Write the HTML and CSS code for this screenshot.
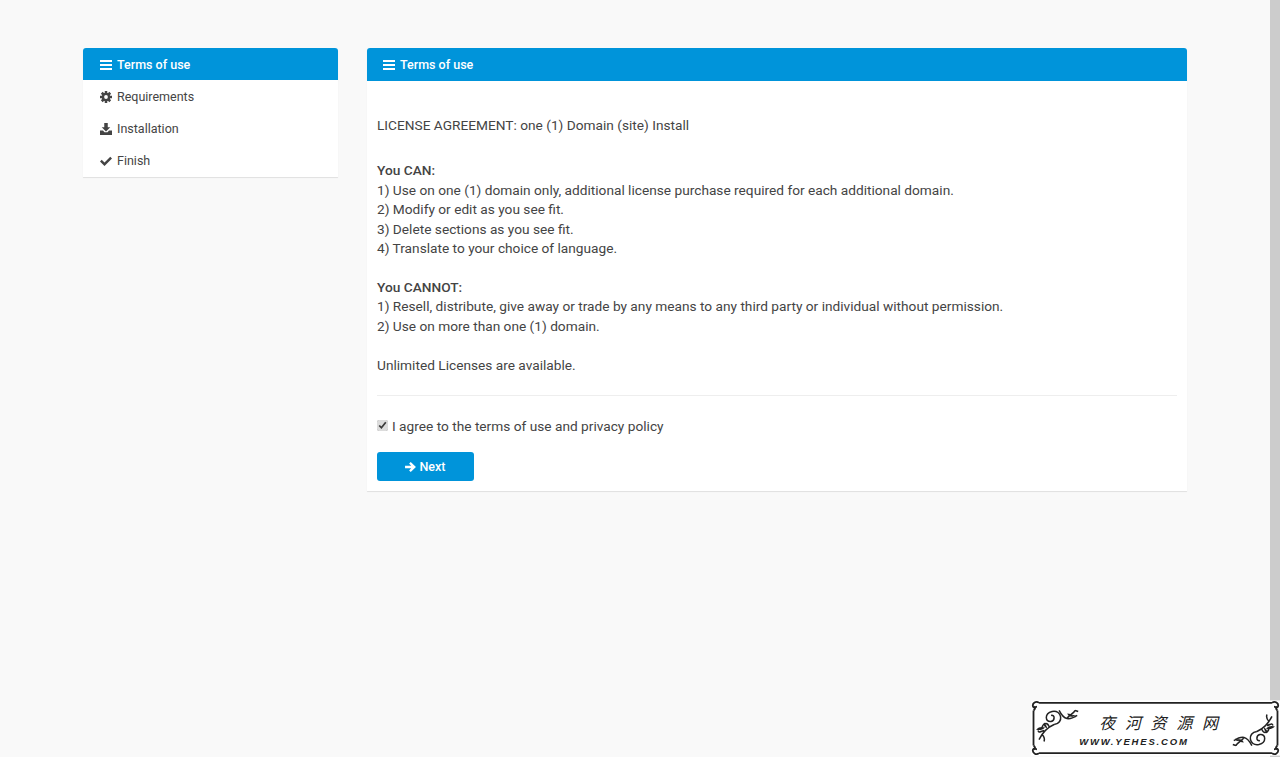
FILE: index.html
```html
<!DOCTYPE html>
<html lang="en">
<head>
<meta charset="utf-8">
<title>Terms of use</title>
<link rel="stylesheet" href="styles.css">
</head>
<body>
<div class="page">
  <div class="wrap">
    <aside class="side">
      <div class="side-item active">
        <svg class="ico" viewBox="0 0 12 10"><path d="M0 0h12v2H0zM0 4h12v2H0zM0 8h12v2H0z"/></svg>
        <span>Terms of use</span>
      </div>
      <div class="side-item">
        <svg class="ico ico-sq" viewBox="0 0 24 24">
          <circle cx="12" cy="12" r="8.500"/>
          <path d="M9.500 0h5v24h-5zM0 9.500h24v5H0z"/>
          <path d="M9.500 0h5v24h-5zM0 9.500h24v5H0z" transform="rotate(45 12 12)"/>
          <circle class="gear-hole" cx="12" cy="12" r="3.800"/>
        </svg>
        <span>Requirements</span>
      </div>
      <div class="side-item">
        <svg class="ico ico-sq" viewBox="0 0 24 24"><path d="M8.500 0h7v8.500h5L12 17 3.500 8.500h5zM0 15h6l3 3.500h6l3-3.500h6v9H0z"/></svg>
        <span>Installation</span>
      </div>
      <div class="side-item">
        <svg class="ico" viewBox="0 0 24 20"><path d="M0 11l3.500-3.500L9 13 20.500 1.500 24 5 9 20z"/></svg>
        <span>Finish</span>
      </div>
    </aside>
    <main class="panel">
      <div class="panel-head">
        <svg class="ico" viewBox="0 0 12 10"><path d="M0 0h12v2H0zM0 4h12v2H0zM0 8h12v2H0z"/></svg>
        <span>Terms of use</span>
      </div>
      <div class="panel-body">
        <p class="lead">LICENSE AGREEMENT: one (1) Domain (site) Install</p>
        <p class="block"><b class="strong">You CAN:</b><br>
        1) Use on one (1) domain only, additional license purchase required for each additional domain.<br>
        2) Modify or edit as you see fit.<br>
        3) Delete sections as you see fit.<br>
        4) Translate to your choice of language.</p>
        <p class="block"><b class="strong">You CANNOT:</b><br>
        1) Resell, distribute, give away or trade by any means to any third party or individual without permission.<br>
        2) Use on more than one (1) domain.</p>
        <p class="block">Unlimited Licenses are available.</p>
        <hr class="rule">
        <label class="agree"><input type="checkbox" class="check" checked> <span>I agree to the terms of use and privacy policy</span></label>
        <button class="next" type="button">
          <svg class="ico-next" viewBox="0 0 24 22"><path d="M12.500 0L24 11 12.500 22l-3.500-3.500 4.500-4.500H0V8h13.500L9 3.500z"/></svg>
          <span>Next</span>
        </button>
      </div>
    </main>
  </div>
  <div class="scrollbar"></div>
</div>
<div class="mark">
  <svg class="mark-art" viewBox="0 0 248 55">
    <rect x="0" y="0" width="248" height="55" fill="#fff"/>
    <path class="frame" d="M8 2.500H240M8 52.500H240M2.500 10V45M245.500 10V45"/>
    <path class="frame" d="M8 2.500c-3-2.500-7 .5-6 3.500.7 2 3.500 1.500 3-.5M2.500 10c2-1.500 2-3 .5-4M240 2.500c3-2.500 7 .5 6 3.500-.7 2-3.500 1.500-3-.5M245.500 10c-2-1.500-2-3-.5-4M8 52.500c-3 2.500-7-.5-6-3.500.7-2 3.500-1.500 3 .5M2.500 45c2 1.500 2 3 .5 4M240 52.500c3 2.500 7-.5 6-3.500-.7-2-3.500-1.500-3 .5M245.500 45c-2 1.500-2 3-.5 4"/>
    <g class="orn">
      <path d="M8 39C12 31 16 27 23 24M13 30C9 31 8 33 7 30M18 26C16 21 12 23 11 27M11 34C13 36 14 38 13 41"/>
      <path d="M23 24C33 23 31 9 21 11C13 13 14 22 20 21C24 20 24 14 20 15"/>
      <path d="M28 10C33 20 38 20 46 15M36 18C38 14 42 14 44 10M44 10l3 1M41 15l4 1"/>
    </g>
    <g class="leaf">
      <path d="M5 29c3-3 6-3 9-2-3 3-6 3-9 2zM13 22c2 2 3 4 3 6-2-1-4-3-3-6zM36 13c3 0 5 1 6 3-3 1-5-1-6-3z"/>
      <path d="M243 26c-3 3-6 3-9 2 3-3 6-3 9-2zM235 33c-2-2-3-4-3-6 2 1 4 3 3 6zM212 42c-3 0-5-1-6-3 3-1 5 1 6 3z"/>
    </g>
    <g class="orn">
      <path d="M240 16C236 24 232 28 225 31M235 25C239 24 240 22 241 25M230 29C232 34 236 32 237 28M237 21C235 19 234 17 235 14"/>
      <path d="M225 31C215 32 217 46 227 44C235 42 234 33 228 34C224 35 224 41 228 40"/>
      <path d="M220 45C215 35 210 35 202 40M212 37C210 41 206 41 204 45M204 45l-3-1M207 40l-4-1"/>
    </g>
    <text class="mark-cn" x="68" y="29">夜 河 资 源 网</text>
    <text class="mark-en" x="48" y="44">WWW.YEHES.COM</text>
  </svg>
</div>
</body>
</html>
```

FILE: styles.css
```css
* { box-sizing: border-box; }
html, body { margin: 0; height: 100%; overflow: hidden; }
body {
  background: #f9f9f9;
  color: #444;
  font-family: Roboto, "Noto Sans", sans-serif;
  font-size: 13.700px;
  line-height: 19.400px;
}
.page { display: flex; height: 757px; position: relative; }
.wrap {
  flex: 1;
  display: flex;
  align-items: flex-start;
  gap: 29px;
  padding: 48px 83px 0 83px;
}
.side {
  width: 255px;
  flex: none;
  padding-bottom: 1px;
  background: #fff;
  border-radius: 3px 3px 0 0;
  box-shadow: 0 1px 1px rgba(0, 0, 0, 0.1);
  font-size: 12.500px;
}
.side-item {
  height: 32px;
  display: flex;
  align-items: center;
  gap: 5px;
  padding-left: 17px;
  padding-top: 1px;
  color: #444;
}
.side-item.active {
  background: #0094da;
  color: #fff;
  border-radius: 3px 3px 0 0;
  font-weight: 500;
}
.ico { width: 12px; height: 10px; fill: currentColor; flex: none; }
.ico-sq { height: 12px; }
.gear-hole { fill: #fff; }
.panel {
  width: 820px;
  flex: none;
  background: #fff;
  border-radius: 3px 3px 0 0;
  box-shadow: 0 1px 1px rgba(0, 0, 0, 0.1);
}
.panel-head {
  height: 33px;
  display: flex;
  align-items: center;
  gap: 5px;
  padding-left: 16px;
  background: #0094da;
  color: #fff;
  font-size: 12.500px;
  font-weight: 500;
  border-radius: 3px 3px 0 0;
}
.panel-body { padding: 35px 10px 10px; }
.lead { margin: 0 0 26px; }
.block { margin: 0 0 19.500px; }
.strong { font-weight: 500; }
.rule { border: 0; border-top: 1px solid #eee; margin: 20px 0 21px; }
.agree { display: flex; align-items: center; gap: 4px; }
.check { width: 11px; height: 11px; margin: 0 0 2px; accent-color: #dcdcdc; }
.next {
  display: flex;
  align-items: center;
  justify-content: center;
  gap: 3px;
  width: 97px;
  height: 29px;
  margin-top: 16px;
  border: 0;
  border-radius: 3px;
  background: #0094da;
  color: #fff;
  font-family: inherit;
  font-size: 12.500px;
  font-weight: 500;
}
.ico-next { width: 11px; height: 10px; fill: currentColor; }
.scrollbar { width: 10px; flex: none; background: #ccc; }
.mark { position: absolute; right: 0; bottom: 1px; width: 249px; height: 56px; }
.mark-art { display: block; width: 249px; height: 56px; }
.frame { fill: none; stroke: #222; stroke-width: 1.800; }
.orn { fill: none; stroke: #222; stroke-width: 1.500; }
.leaf { fill: #222; }
.mark-cn { font-family: "Noto Sans CJK SC", sans-serif; font-size: 16px; font-style: italic; letter-spacing: 3px; fill: #222; }
.mark-en { font-family: "Liberation Sans", sans-serif; font-size: 9.500px; font-style: italic; font-weight: 700; letter-spacing: 1.800px; fill: #222; }
```
